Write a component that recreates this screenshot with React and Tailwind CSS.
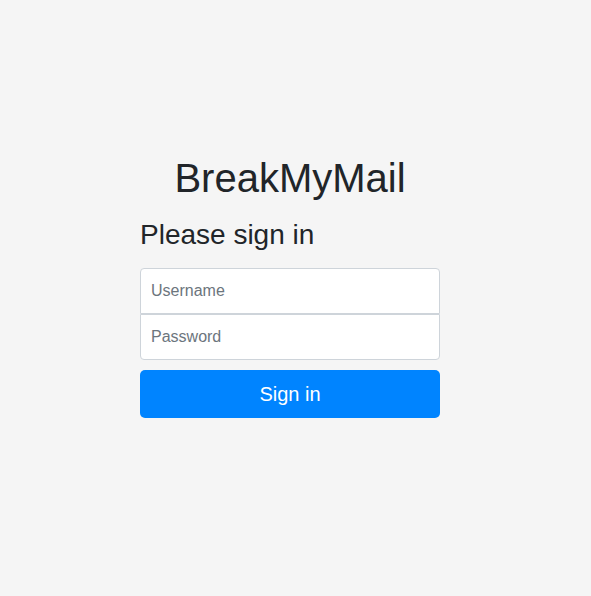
import React from "react";

export default function App() {
  return (
    <div className="min-h-screen w-full bg-[#f5f5f5] text-[#212529] font-['Liberation_Sans',Arial,sans-serif]">
      <div className="flex justify-center pt-[154px] pr-[11px]">
        <form className="w-[300px]" onSubmit={(e) => e.preventDefault()}>
          <h1 className="text-center text-[40px] leading-[48px] mb-4 font-normal">BreakMyMail</h1>
          <h3 className="text-[28px] leading-[34px] mb-4 font-normal">Please sign in</h3>
          <input
            type="text"
            placeholder="Username"
            className="block w-full h-[46px] px-[10px] text-base bg-white border border-[#ced4da] rounded-t-[4px] placeholder-[#6c757d] outline-none"
          />
          <input
            type="password"
            placeholder="Password"
            className="block w-full h-[46px] px-[10px] text-base bg-white border border-[#ced4da] rounded-b-[4px] placeholder-[#6c757d] outline-none"
          />
          <button
            type="submit"
            className="mt-[10px] block w-full h-[48px] bg-[#0084ff] text-white text-[20px] rounded-[5px]"
          >
            Sign in
          </button>
        </form>
      </div>
    </div>
  );
}
